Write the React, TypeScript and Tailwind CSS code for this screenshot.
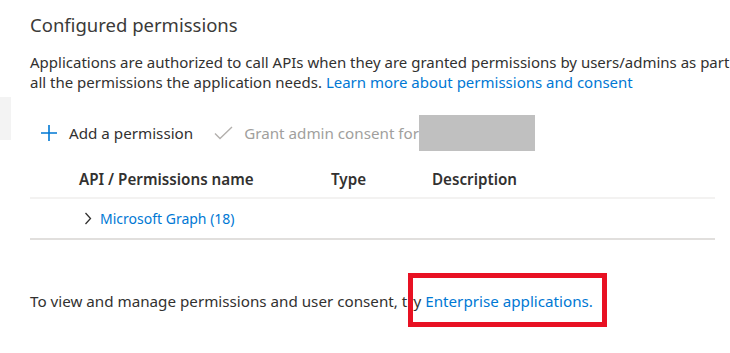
const FONT = "font-['Segoe_UI','Noto_Sans','Open_Sans',sans-serif]";

function PlusIcon() {
  return (
    <svg width="18" height="18" viewBox="0 0 18 18" className="text-[#0078d4]">
      <path d="M9 1v16M1 9h16" stroke="currentColor" strokeWidth="1.6" fill="none" />
    </svg>
  );
}

function CheckIcon() {
  return (
    <svg width="19" height="14" viewBox="0 0 19 14" className="text-[#b3b0ad]">
      <path d="M1 7.5l5 5L18 1" stroke="currentColor" strokeWidth="1.4" fill="none" />
    </svg>
  );
}

function Chevron() {
  return (
    <svg width="8" height="13" viewBox="0 0 8 13" className="text-[#323130]">
      <path d="M1.5 1l5 5.5-5 5.5" stroke="currentColor" strokeWidth="1.3" fill="none" />
    </svg>
  );
}

export default function App() {
  return (
    <div className={`${FONT} relative w-[730px] h-[353px] overflow-hidden bg-white text-[#323130]`}>
      <div className="absolute left-0 top-[97px] w-[11px] h-[43px] bg-[#f3f3f3]" />
      <div className="pl-[30px] pt-[12px]">
        <h2 className="text-[18.5px] leading-[26px] font-normal text-[#3b3a39]">Configured permissions</h2>

        <p className="mt-[14px] text-[15px] leading-[20px] whitespace-nowrap">
          Applications are authorized to call APIs when they are granted permissions by users/admins as part of the consent process.
          <br />
          all the permissions the application needs.{" "}
          <a className="text-[#0078d4]">Learn more about permissions and consent</a>
        </p>

        <div className="mt-[23px] flex items-center h-[36px] text-[15.2px]">
          <div className="flex items-center pl-[10px]">
            <PlusIcon />
            <span className="ml-[11px]">Add a permission</span>
          </div>
          <div className="flex items-center ml-[21px] text-[#a19f9d]">
            <CheckIcon />
            <span className="ml-[11px]">Grant admin consent for</span>
            <span className="w-[116px] h-[36px] bg-[#c0c0c0]" />
          </div>
        </div>

        <div className="mt-[10px] w-[685px] text-[15.2px]">
          <div className="flex items-center h-[38px] font-semibold border-b-2 border-[#f3f2f1]">
            <span className="ml-[49px] w-[252px]">API / Permissions name</span>
            <span className="w-[101px]">Type</span>
            <span>Description</span>
          </div>
          <div className="flex items-center h-[41px] border-b-2 border-[#e1dfdd]">
            <span className="ml-[54px] flex items-center">
              <Chevron />
            </span>
            <a className="ml-[8px] text-[14px] text-[#0078d4]">Microsoft Graph (18)</a>
          </div>
        </div>

        <p className="mt-[51px] text-[15.2px] leading-[20px] whitespace-nowrap">
          To view and manage permissions and user consent, try{" "}
          <span className="relative">
            <a className="text-[#0078d4]">Enterprise applications.</a>
            <span className="absolute left-[-17px] right-[-14px] top-[-18px] bottom-[-16px] border-[5px] border-[#e81123]" />
          </span>
        </p>
      </div>
    </div>
  );
}
